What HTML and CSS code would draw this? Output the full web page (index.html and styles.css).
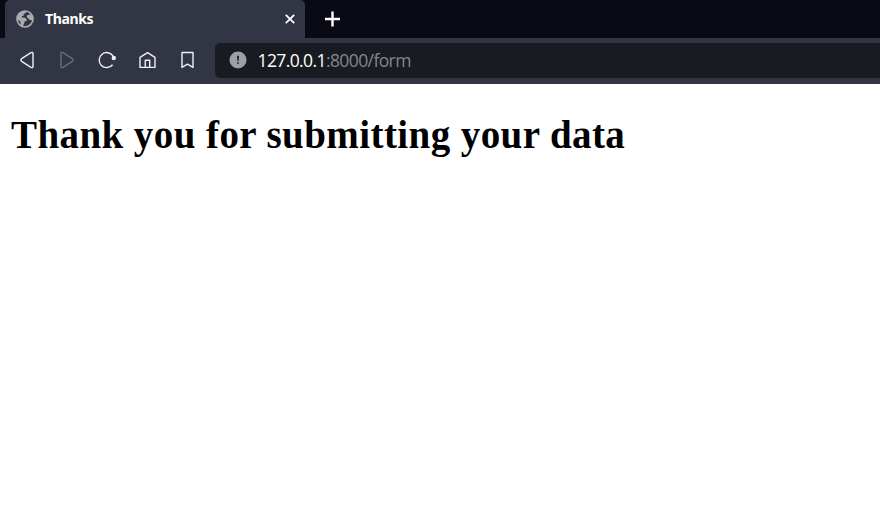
FILE: index.html
```html
<!DOCTYPE html>
<html lang="en">
<head>
<meta charset="utf-8">
<title>Thanks</title>
<link rel="stylesheet" href="styles.css">
</head>
<body>
<header class="tabs">
  <div class="tab">
    <svg class="globe" width="18" height="18" viewBox="0 0 18 18"><circle cx="9" cy="9" r="8" fill="none" stroke="#a9abb3" stroke-width="1.7"/><path fill="#a9abb3" d="M1 7.5 2.8 3.7 6.3 1.2 10.2 1 9.8 3 7.8 3.8 7.6 5.8 5.8 6.1 6 7.6 9 7.7 10.8 9.4 10.5 11.1 8.5 11.5 8.2 13.6 6.5 16.7 4.2 15.1 4.8 12.2 1.3 9.2ZM11 5.3 13.2 4.8 15.8 4.3 17 8.5 16.2 10.2 13.8 10 12.3 8.5 11 7.6Z"/></svg>
    <span class="name">Thanks</span>
    <svg class="close" width="10" height="10" viewBox="0 0 10 10"><path d="M.8.8 9.2 9.2M9.2.8.8 9.2"/></svg>
  </div>
  <svg class="plus" width="16" height="16" viewBox="0 0 16 16"><path d="M7.5 .5V15.5M0 8H15"/></svg>
</header>
<nav class="toolbar">
  <svg class="tool" width="20" height="20" viewBox="0 0 20 20"><path d="M14 2.7Q16 1.6 16 3.8V16.2Q16 18.4 14 17.3L4.6 11.3Q3.1 10 4.6 8.7Z"/></svg>
  <svg class="tool dim" width="20" height="20" viewBox="0 0 20 20"><path d="M6 2.7Q4 1.6 4 3.8V16.2Q4 18.4 6 17.3L15.4 11.3Q16.9 10 15.4 8.7Z"/></svg>
  <svg class="tool" width="20" height="20" viewBox="0 0 20 20"><path d="M15.6 14.7A7.5 7.5 0 1 1 16.1 6.2"/><circle class="dot" cx="16.8" cy="8" r="2.2"/></svg>
  <svg class="tool" width="20" height="20" viewBox="0 0 20 20"><path d="M3 7.4 10.5 2.6 18 7.4V17.4H3ZM8.3 17.2V10.2H12.7V17.2"/></svg>
  <svg class="tool" width="20" height="20" viewBox="0 0 20 20"><path d="M5 2.5H16V17.4L10.5 14.2 5 17.4Z"/></svg>
  <div class="address">
    <svg width="18" height="18" viewBox="0 0 18 18"><circle cx="9" cy="9" r="8.5" fill="#9da0a8"/><path d="M8 4.7H10L9.6 10H8.4ZM8.2 11.2H9.8V12.8H8.2Z" fill="#181b22"/></svg>
    <span class="url"><b>127.0.0.1</b>:8000/form</span>
  </div>
</nav>
<main><h1>Thank you for submitting your data</h1></main>
</body>
</html>
```
FILE: styles.css
```css
* { box-sizing: border-box; }
body { margin: 0; height: 516px; overflow: hidden; background: #fff; }
svg { display: block; flex: none; }
.tabs { display: flex; align-items: center; height: 38px; padding-left: 5px; background: #0a0a15; }
.tab { display: flex; align-items: center; width: 300px; height: 38px; padding: 0 10px 0 11px; background: #323644; border-radius: 5px 5px 0 0; }
.name { margin-left: 11px; flex: 1; color: #fff; font: 700 14px/20px "Noto Sans", sans-serif; letter-spacing: -.35px; }
.close { stroke: #fff; stroke-width: 1.8; }
.plus { margin-left: 20px; fill: none; stroke: #fff; stroke-width: 2.4; }
.toolbar { display: flex; align-items: center; height: 46px; padding: 0 0 2px 17px; background: #323644; }
.tool { margin-right: 20px; fill: none; stroke: #eef0f5; stroke-width: 1.4; stroke-linejoin: round; }
.tool .dot { fill: #eef0f5; stroke: none; }
.tool.dim { stroke: #696c78; }
.address { display: flex; align-items: center; flex: 1; height: 35px; margin-left: -2px; padding-left: 13.5px; background: #181b22; border-radius: 5px 0 0 5px; }
.url { margin-left: 11px; color: #85878b; font: 400 17.5px/24px "Open Sans", sans-serif; letter-spacing: -.6px; white-space: nowrap; }
.url b { color: #fff; font-weight: 400; }
main { padding: 28px 11px; }
h1 { margin: 0; color: #000; font: 700 39px/46px "Liberation Serif", serif; letter-spacing: .42px; white-space: nowrap; }
```
